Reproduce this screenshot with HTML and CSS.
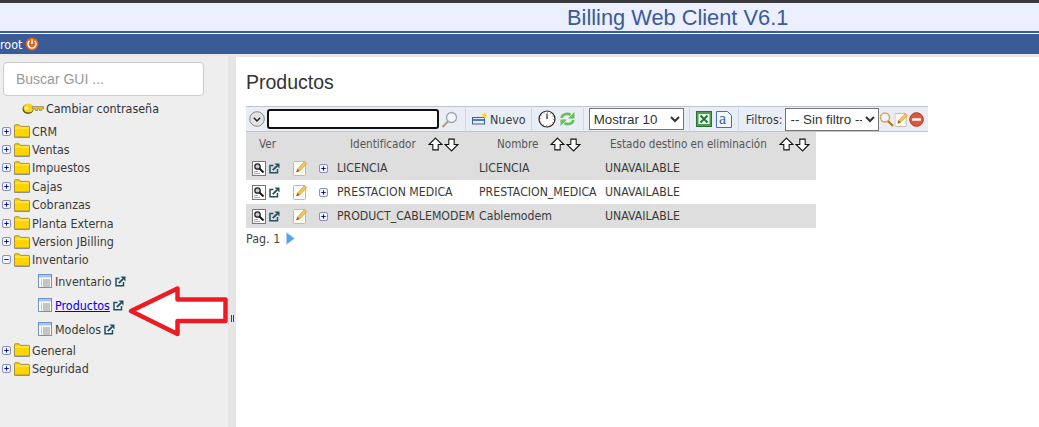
FILE: index.html
```html
<!DOCTYPE html>
<html lang="es">
<head>
<meta charset="utf-8">
<title>Billing Web Client</title>
<link rel="stylesheet" href="styles.css">
</head>
<body>
<svg class="defs" width="0" height="0">
  <defs>
    <symbol id="plus" viewBox="0 0 10 10"><rect x=".5" y=".5" width="9" height="9" rx="2" fill="#f4f6ff" stroke="#6a7ac0"/><path d="M2.500 5h5M5 2.500v5" stroke="#00009a" fill="none"/></symbol>
    <symbol id="minus" viewBox="0 0 10 10"><rect x=".5" y=".5" width="9" height="9" rx="2" fill="#f4f6ff" stroke="#6a7ac0"/><path d="M2.500 5h5" stroke="#00009a" fill="none"/></symbol>
    <symbol id="folder" viewBox="0 0 16 14"><path d="M.5 13V1.500Q.5.800 1.200.800h4l1.300 1.600h8.300q.7 0 .7.700V13z" fill="#ffd500" stroke="#a8903c"/><path d="M1 4h14" stroke="#fff07a"/><path d="M.5 13.500h15" stroke="#8f8f8f"/></symbol>
    <symbol id="list" viewBox="0 0 14 14"><rect x=".5" y=".5" width="13" height="13" fill="#fff" stroke="#6d93c4"/><rect x="1" y="1" width="12" height="2.500" fill="#a9c6e8"/><path d="M3 6h1M3 8h1M3 10h1M3 12h1" stroke="#d8791c"/><path d="M5 6h7M5 8h7M5 10h7M5 12h7" stroke="#8a8a8a"/></symbol>
    <symbol id="ext" viewBox="0 0 11 11"><path d="M8.500 6v3.800H1V2.500h3.500" fill="none" stroke="#23505f" stroke-width="1.500"/><path d="M3.800 7.200L8 3" stroke="#23505f" stroke-width="1.800"/><path d="M5.500 .6h5v5z" fill="#23505f"/></symbol>
    <symbol id="view" viewBox="0 0 14 15"><rect x=".5" y=".5" width="13" height="14" fill="#fff" stroke="#777"/><circle cx="5.500" cy="5.500" r="2.700" fill="#c8c8c8" stroke="#222" stroke-width="1.300"/><path d="M7.500 7.500l4 4" stroke="#111" stroke-width="1.800"/><path d="M2 10.500h4M2 12.500h6" stroke="#aaa"/></symbol>
    <symbol id="edit" viewBox="0 0 15 16"><rect x=".5" y="1.500" width="12" height="14" rx="1" fill="#fdfdf6" stroke="#c0b9a5"/><path d="M3.500 12l1-3 7-7.500 2.300 2.200-7.200 7.300z" fill="#f6c25a" stroke="#d89a2c" stroke-width=".7"/><path d="M3.500 12l1-3 2.100 2z" fill="#7a5a2a"/></symbol>
    <symbol id="up" viewBox="0 0 14 14"><path d="M7 1l6 6H9.500v5h-5V7H1z" fill="#fff" stroke="#111"/></symbol>
    <symbol id="down" viewBox="0 0 14 14"><path d="M7 13L1 7h3.500V2h5v5H13z" fill="#fff" stroke="#111"/></symbol>
  </defs>
</svg>

<div class="topline"></div>
<header class="masthead"><h1 class="app-title">Billing Web Client V6.1</h1></header>
<div class="userbar">
  <span class="username">root</span>
  <svg class="power" viewBox="0 0 14 14" width="14" height="14"><circle cx="7" cy="7" r="6.500" fill="#e0651c"/><path d="M4.500 3.900a4 4 0 1 0 5 0" fill="none" stroke="#fff" stroke-width="1.500"/><path d="M7 2.300v4.700" stroke="#fff" stroke-width="1.500"/></svg>
</div>

<div class="workspace">
  <aside class="sidebar">
    <input class="search" type="text" placeholder="Buscar GUI ...">
    <div class="passrow">
      <svg class="key" viewBox="0 0 22 13" width="22" height="13"><ellipse cx="6" cy="7" rx="5.500" ry="5" fill="#5c5420"/><ellipse cx="6.500" cy="6" rx="5" ry="4.500" fill="#f7d51c"/><ellipse cx="4.500" cy="6" rx="1.800" ry="1.600" fill="#fff6b0"/><path d="M10 4.500h11.500v2.500h-2v1.500h-2V7h-2v1.500h-2V7h-3z" fill="#e4c21c" stroke="#777" stroke-width=".6"/></svg>
      <span>Cambiar contraseña</span>
    </div>
    <ul class="tree">
      <li class="node"><svg class="tog"><use href="#plus"/></svg><svg class="fold"><use href="#folder"/></svg>CRM</li>
      <li class="node"><svg class="tog"><use href="#plus"/></svg><svg class="fold"><use href="#folder"/></svg>Ventas</li>
      <li class="node"><svg class="tog"><use href="#plus"/></svg><svg class="fold"><use href="#folder"/></svg>Impuestos</li>
      <li class="node"><svg class="tog"><use href="#plus"/></svg><svg class="fold"><use href="#folder"/></svg>Cajas</li>
      <li class="node"><svg class="tog"><use href="#plus"/></svg><svg class="fold"><use href="#folder"/></svg>Cobranzas</li>
      <li class="node"><svg class="tog"><use href="#plus"/></svg><svg class="fold"><use href="#folder"/></svg>Planta Externa</li>
      <li class="node"><svg class="tog"><use href="#plus"/></svg><svg class="fold"><use href="#folder"/></svg>Version JBilling</li>
      <li class="node"><svg class="tog"><use href="#minus"/></svg><svg class="fold"><use href="#folder"/></svg>Inventario</li>
      <li class="leaf"><svg class="lst"><use href="#list"/></svg><span>Inventario</span><svg class="ext"><use href="#ext"/></svg></li>
      <li class="leaf"><svg class="lst"><use href="#list"/></svg><a href="#" class="active">Productos</a><svg class="ext"><use href="#ext"/></svg></li>
      <li class="leaf"><svg class="lst"><use href="#list"/></svg><span>Modelos</span><svg class="ext"><use href="#ext"/></svg></li>
      <li class="node"><svg class="tog"><use href="#plus"/></svg><svg class="fold"><use href="#folder"/></svg>General</li>
      <li class="node"><svg class="tog"><use href="#plus"/></svg><svg class="fold"><use href="#folder"/></svg>Seguridad</li>
    </ul>
    <svg class="callout" viewBox="0 0 104 56" width="104" height="56"><path d="M6 27L52.500 4.500v11h48V37h-48v13z" fill="#fff" stroke="#ed1c24" stroke-width="4.500" stroke-linejoin="round"/></svg>
  </aside>
  <div class="splitter"><span class="grip"></span></div>
  <main class="content">
    <h2 class="page-title">Productos</h2>
    <div class="toolbar">
      <svg class="tb-circle" viewBox="0 0 16 16" width="16" height="16"><circle cx="8" cy="8" r="7.300" fill="#e4e4e4" stroke="#888"/><path d="M4.800 6.800L8 10l3.200-3.200" fill="none" stroke="#222" stroke-width="1.500"/></svg>
      <input class="tb-search" type="text">
      <svg class="tb-lens" viewBox="0 0 17 17" width="17" height="17"><circle cx="10.500" cy="6.500" r="5" fill="#f4f7fa" stroke="#9aa6b0" stroke-width="1.300"/><path d="M7 10.500L1.500 16" stroke="#b39a70" stroke-width="2"/></svg>
      <i class="sep"></i>
      <span class="tb-new">
        <svg viewBox="0 0 16 14" width="16" height="14"><rect x=".5" y="5.500" width="12" height="6.500" fill="#e8eefc" stroke="#3b5fa8"/><rect x="1" y="7" width="11" height="2" fill="#4a7cc8"/><path d="M12 0l1 2 2-1-1 2.500 2 1-2.500.5-.5 2-1-2-2 .5 1-2-1.500-1.500 2 .2z" fill="#f9d92a"/></svg>Nuevo
      </span>
      <i class="sep"></i>
      <svg class="tb-clock" viewBox="0 0 18 18" width="18" height="18"><circle cx="9" cy="9" r="8" fill="#fff" stroke="#222" stroke-width="1.200"/><circle cx="9" cy="9" r="6.600" fill="none" stroke="#c33" stroke-dasharray=".8 2.650"/><path d="M9 3.500V9" stroke="#222" stroke-width="1.200"/></svg>
      <svg class="tb-refresh" viewBox="0 0 17 16" width="17" height="16"><path d="M2.500 7A5.800 5.200 0 0 1 11.500 3.800" fill="none" stroke="#68bf5a" stroke-width="2.600"/><path d="M15.500 1v6.500H9z" fill="#68bf5a"/><path d="M14.500 9A5.800 5.200 0 0 1 5.500 12.200" fill="none" stroke="#68bf5a" stroke-width="2.600"/><path d="M1.500 15V8.500H8z" fill="#68bf5a"/></svg>
      <i class="sep"></i>
      <select class="tb-show"><option>Mostrar 10</option></select>
      <i class="sep"></i>
      <svg class="tb-xls" viewBox="0 0 16 16" width="16" height="16"><rect x=".5" y=".5" width="15" height="15" fill="#4c9c58" stroke="#2b7038"/><rect x="2.500" y="3" width="11" height="10" fill="#eef5ea"/><path d="M4.500 4.500l7 7M11.500 4.500l-7 7" stroke="#1e7a30" stroke-width="2"/></svg>
      <svg class="tb-a" viewBox="0 0 16 17" width="16" height="17"><path d="M.5 .5h11l4 4v12H.5z" fill="#f2f6fc" stroke="#4a6ea8"/><text class="tb-a-letter" x="3" y="13">a</text></svg>
      <i class="sep"></i>
      <span class="tb-label">Filtros:</span>
      <select class="tb-filter"><option>-- Sin filtro --</option></select>
      <svg class="tb-f" viewBox="0 0 15 15" width="15" height="15"><circle cx="6" cy="5.500" r="4.500" fill="#eef3f8" stroke="#d9a552" stroke-width="1.400"/><path d="M9 9l5 5" stroke="#b8741c" stroke-width="2.200"/></svg>
      <svg class="tb-f" viewBox="0 0 15 16" width="15" height="15"><use href="#edit"/></svg>
      <svg class="tb-f" viewBox="0 0 15 15" width="15" height="15"><circle cx="7.500" cy="7.500" r="6.800" fill="#e2553c" stroke="#b3351f"/><rect x="3" y="6.300" width="9" height="2.400" fill="#fff"/></svg>
    </div>
    <table class="grid">
      <thead>
        <tr>
          <th class="c-ver">Ver</th>
          <th class="c-id">Identificador<span class="sort"><svg><use href="#up"/></svg><svg><use href="#down"/></svg></span></th>
          <th class="c-name">Nombre<span class="sort"><svg><use href="#up"/></svg><svg><use href="#down"/></svg></span></th>
          <th class="c-state">Estado destino en eliminación<span class="sort"><svg><use href="#up"/></svg><svg><use href="#down"/></svg></span></th>
        </tr>
      </thead>
      <tbody>
        <tr class="odd">
          <td><span class="acts-in"><svg class="a-v"><use href="#view"/></svg><svg class="a-x"><use href="#ext"/></svg><svg class="a-e"><use href="#edit"/></svg><svg class="a-p"><use href="#plus"/></svg></span></td>
          <td class="cell">LICENCIA</td><td class="cell">LICENCIA</td><td class="cell">UNAVAILABLE</td>
        </tr>
        <tr>
          <td><span class="acts-in"><svg class="a-v"><use href="#view"/></svg><svg class="a-x"><use href="#ext"/></svg><svg class="a-e"><use href="#edit"/></svg><svg class="a-p"><use href="#plus"/></svg></span></td>
          <td class="cell">PRESTACION MEDICA</td><td class="cell">PRESTACION_MEDICA</td><td class="cell">UNAVAILABLE</td>
        </tr>
        <tr class="odd">
          <td><span class="acts-in"><svg class="a-v"><use href="#view"/></svg><svg class="a-x"><use href="#ext"/></svg><svg class="a-e"><use href="#edit"/></svg><svg class="a-p"><use href="#plus"/></svg></span></td>
          <td class="cell">PRODUCT_CABLEMODEM</td><td class="cell">Cablemodem</td><td class="cell">UNAVAILABLE</td>
        </tr>
      </tbody>
    </table>
    <div class="pager">Pag. 1 <svg viewBox="0 0 9 13" width="9" height="13"><path d="M.5 .5L8.500 6.500.5 12.500z" fill="#5a9fe6" stroke="#a8ccf0" stroke-width=".6"/></svg></div>
  </main>
</div>
</body>
</html>
```

FILE: styles.css
```css
* { box-sizing: border-box; }
html, body { margin: 0; padding: 0; height: 100%; overflow: hidden; }
body { width: 1039px; height: 427px; background: #e8e8e8; font-family: "DejaVu Sans", sans-serif; font-stretch: condensed; font-size: 12.400px; color: #3a3a3a; display: flex; flex-direction: column; }
.defs { position: absolute; }
.topline { height: 3px; background: #3a3a3c; flex: none; }
.masthead { height: 28px; background: #eceffe; flex: none; padding-left: 567px; }
.app-title { margin: 0; font: 400 21.800px/30px "Liberation Sans", sans-serif; color: #3b5a98; }
.userbar { height: 23px; flex: none; background: #3b5a98; border-top: 2px solid #3b5a98; display: flex; align-items: center; position: relative; padding-top: 1px; color: #fff; }
.userbar::before { content: ""; position: absolute; left: 0; right: 0; top: 0; height: 1px; background: #fff; }
.username { margin-right: 3px; }
.workspace { flex: 1; display: flex; min-height: 0; padding-top: 2px; }
.sidebar { width: 228px; flex: none; background: #eeeeee; position: relative; padding: 6px 0 0 3px; }
.search { display: block; width: 201px; height: 34px; border: 1px solid #ccc; border-radius: 4px; background: #fff; padding: 0 12px; font: 14px "Liberation Sans", sans-serif; color: #555; outline: 0; }
.search::placeholder { color: #999; opacity: 1; }
.passrow { display: flex; align-items: center; height: 20px; margin-top: 2px; padding-left: 19px; gap: 2px; color: #2d3340; }
.tree { list-style: none; margin: 4px 0 0; padding: 0; }
.node { height: 18.400px; display: flex; align-items: center; margin-left: -1px; }
.tog { width: 9px; height: 9px; margin-right: 3px; flex: none; }
.fold { width: 16px; height: 14px; margin-right: 2px; flex: none; }
.leaf { height: 24px; display: flex; align-items: center; padding-left: 35px; }
.lst { width: 14px; height: 14px; margin-right: 3px; flex: none; }
.ext { width: 11px; height: 11px; margin-left: 3px; flex: none; }
.active { color: #0000ee; text-decoration: underline; }
.callout { position: absolute; left: 125px; top: 228px; overflow: visible; }
.splitter { width: 8px; flex: none; background: #e5e5e5; position: relative; }
.grip { position: absolute; left: 3px; top: 259px; width: 3px; height: 7px; border-left: 1px solid #444; border-right: 1px solid #444; }
.content { flex: 1; background: #fff; padding: 13px 0 0 10px; min-width: 0; margin-top: 1px; }
.page-title { margin: 0; font: 400 19.500px/24px "Liberation Sans", sans-serif; color: #333; }
.toolbar { width: 682px; height: 26px; margin-top: 12px; display: flex; align-items: center; background: #e9edf6; border-top: 1px solid #bcc4d4; border-bottom: 1px solid #bcc4d4; padding-left: 3px; }
.tb-circle { flex: none; margin-right: 2px; }
.tb-search { width: 172px; height: 20px; border: 2px solid #111; border-radius: 3px; background: #fff; padding: 0; outline: 0; flex: none; }
.tb-lens { margin: 0 7px 0 2px; flex: none; }
.sep { width: 1px; height: 22px; background: #d0d7e4; flex: none; }
.tb-new { display: flex; align-items: center; gap: 2px; margin: 0 5px 0 6px; }
.tb-clock { margin: 0 3px 0 6px; flex: none; }
.tb-refresh { flex: none; margin-right: 7px; }
.tb-show { width: 95px; height: 22px; margin: 0 5px; border: 1px solid #767676; background: #fff; font: 13.330px "Liberation Sans", sans-serif; color: #333; flex: none; }
.tb-xls { margin: 0 4px 0 6px; flex: none; }
.tb-a { flex: none; margin-right: 6px; }
.tb-a-letter { font: 400 16px "Liberation Serif", serif; fill: #35609f; }
.tb-label { margin: 0 3px 0 7px; }
.tb-filter { width: 94px; height: 23px; border: 1px solid #767676; background: #fff; font: 13.330px "Liberation Sans", sans-serif; color: #333; flex: none; padding: 0; }
.tb-f { flex: none; }
.grid { border-collapse: collapse; width: 570px; table-layout: fixed; }
.grid th { font-size: 11.600px; font-weight: 400; color: #555; background: #dedede; height: 24px; padding: 0; text-align: left; white-space: nowrap; }
.grid td { height: 24px; padding: 0; font-size: 12.200px; white-space: nowrap; }
.grid .cell { padding-left: 6px; padding-bottom: 1px; }
.odd td { background: #dedede; }
.grid .c-ver { width: 85px; padding-left: 13px; }
.grid .c-id { width: 142px; padding-left: 19px; }
.grid .c-name { width: 126px; padding-left: 24px; }
.grid .c-state { padding-left: 11px; }
.sort { display: inline-flex; margin-left: 12px; vertical-align: middle; }
.sort svg { width: 15px; height: 15px; margin-right: 1px; }
.acts-in { display: flex; align-items: center; padding-left: 6px; }
.acts-in svg { flex: none; }
.a-v { width: 14px; height: 15px; }
.a-x { width: 11px; height: 11px; margin-left: 3px; }
.a-e { width: 15px; height: 16px; margin-left: 13px; }
.a-p { width: 9px; height: 9px; margin-left: 11px; }
.pager { margin-top: 3px; display: flex; align-items: center; gap: 6px; color: #444; }
```
